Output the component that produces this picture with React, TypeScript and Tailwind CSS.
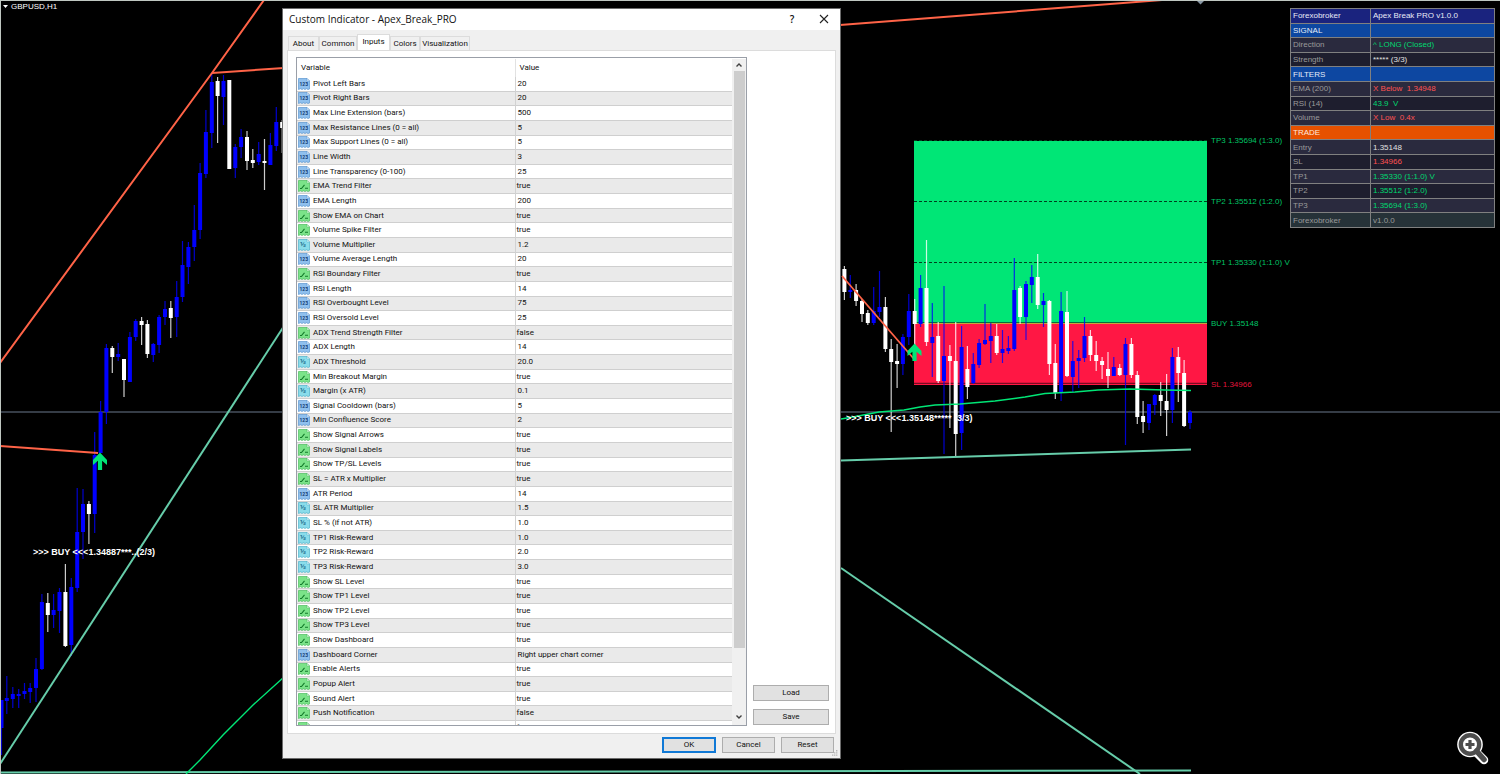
import React from 'react';

type Candle = [x: number, high: number, low: number, top: number, bottom: number, bull: 0 | 1];

const candles: Candle[] = [
  [1.5, 700, 755, 700, 728, 1], [6.8, 676, 714, 698, 701, 1], [12.8, 687, 708, 694, 699, 1],
  [18.7, 689, 708, 694, 695, 1], [24.5, 683, 699, 691, 694, 1], [30.2, 683, 703, 688, 692, 1],
  [36, 658, 702, 669, 688, 1], [41.9, 594, 670, 602, 669, 1], [47.8, 593, 632, 603, 615, 0],
  [53.6, 594, 628, 610, 615, 1], [59.5, 588, 633, 592, 611, 1], [65.4, 564, 647, 592, 646, 0],
  [71.3, 578, 656, 587, 645, 1], [77.2, 488, 592, 532, 588, 1], [83, 489, 559, 504, 532, 1],
  [88.9, 501, 544, 504, 514, 0], [94.7, 432, 533, 455, 514, 1], [100.6, 401, 453, 412, 453, 1],
  [106.4, 344, 424, 348, 412, 1], [112.3, 346, 373, 348, 357, 0], [118.2, 343, 361, 354, 357, 1],
  [124, 359, 397, 359, 380, 0], [129.9, 332, 382, 337, 382, 1], [135.7, 319, 341, 321, 337, 1],
  [141.6, 317, 345, 321, 325, 0], [147.4, 320, 358, 324, 354, 0], [153.3, 343, 362, 344, 355, 1],
  [159.1, 315, 353, 317, 345, 1], [165, 301, 325, 309, 317, 1], [170.8, 301, 338, 308, 318, 0],
  [176.7, 281, 337, 297, 317, 1], [182.5, 241, 302, 265, 297, 1], [188.4, 242, 284, 247, 267, 1],
  [194.3, 205, 261, 230, 247, 1], [200.1, 163, 239, 173, 230, 1], [205.9, 110, 178, 132, 174, 1],
  [211.8, 73, 148, 82, 133, 1], [217.6, 77, 143, 81, 96, 0], [223.5, 75, 125, 81, 97, 1],
  [229.3, 80, 169, 80, 169, 0], [235.3, 144, 178, 147, 168, 1], [241.1, 129, 158, 137, 147, 1],
  [247, 131, 170, 137, 161, 0], [252.8, 149, 168, 160, 163, 0], [258.7, 142, 165, 154, 162, 1],
  [264.5, 139, 190, 161, 163, 0], [270.4, 133, 165, 145, 165, 1], [276.3, 107, 151, 122, 146, 1],
  [282.2, 120, 153, 122, 128, 0],
  [844.4, 266, 300, 269, 292, 0], [850.3, 275, 298, 290, 292, 1], [856.1, 284, 306, 290, 301, 0],
  [862, 299, 322, 301, 314, 0], [867.8, 310, 325, 313, 323, 0], [873.7, 287, 325, 311, 323, 1],
  [879.5, 271, 317, 307, 312, 1], [885.4, 297, 352, 307, 349, 0], [891.2, 339, 432, 349, 362, 0],
  [897.1, 344, 388, 361, 364, 0], [902.9, 334, 375, 337, 364, 1], [908.8, 294, 345, 311, 337, 1],
  [914.7, 299, 345, 311, 324, 0], [920.6, 275, 327, 288, 324, 1], [926.5, 240, 346, 288, 342, 0],
  [932.3, 303, 377, 337, 343, 1], [938.2, 322, 383, 336, 381, 0], [944, 286, 454, 356, 381, 1],
  [949.9, 345, 428, 356, 361, 0], [955.7, 322, 457, 361, 434, 0], [961.6, 326, 450, 347, 433, 1],
  [967.4, 346, 399, 369, 387, 0], [973.3, 353, 384, 364, 383, 1], [979.1, 339, 368, 343, 365, 1],
  [985, 304, 345, 340, 344, 1], [990.8, 323, 363, 336, 341, 1], [996.7, 324, 355, 336, 353, 0],
  [1002.5, 330, 363, 349, 353, 1], [1008.4, 336, 354, 348, 351, 1], [1014.3, 258, 351, 290, 349, 1],
  [1020.1, 286, 324, 288, 317, 0], [1026, 281, 340, 284, 317, 1], [1031.8, 265, 303, 277, 285, 1],
  [1037.7, 254, 309, 277, 305, 0], [1043.5, 293, 327, 301, 305, 1], [1049.4, 300, 375, 301, 364, 0],
  [1055.3, 344, 399, 363, 393, 0], [1061.1, 292, 401, 311, 392, 1], [1067, 291, 377, 312, 376, 0],
  [1072.8, 341, 392, 361, 377, 1], [1078.7, 350, 388, 358, 361, 1], [1084.5, 317, 362, 336, 358, 1],
  [1090.4, 330, 361, 336, 355, 0], [1096.2, 341, 371, 355, 361, 0], [1102.1, 357, 379, 361, 365, 0],
  [1108, 352, 388, 369, 376, 0], [1113.8, 357, 376, 367, 376, 1], [1119.7, 364, 376, 368, 375, 0],
  [1125.5, 338, 445, 344, 375, 1], [1131.4, 338, 378, 344, 375, 0], [1137.3, 371, 424, 375, 417, 0],
  [1143.1, 401, 433, 416, 422, 0], [1149, 404, 430, 404, 423, 1], [1154.8, 394, 415, 395, 405, 1],
  [1160.7, 382, 416, 395, 401, 0], [1166.6, 374, 436, 401, 410, 0], [1172.4, 348, 423, 357, 410, 1],
  [1178.3, 347, 402, 357, 373, 0], [1184.1, 360, 427, 373, 426, 0], [1190, 410, 429, 412, 423, 1],
];

const levels = [
  { y: 140, text: 'TP3 1.35694 (1:3.0)', color: '#00c466' },
  { y: 201, text: 'TP2 1.35512 (1:2.0)', color: '#00c466' },
  { y: 262, text: 'TP1 1.35330 (1:1.0) V', color: '#00c466' },
  { y: 323, text: 'BUY 1.35148', color: '#00c466' },
  { y: 384, text: 'SL 1.34966', color: '#e0153c' },
];

function SignalArrow({ x, y }: { x: number; y: number }) {
  return (
    <path
      transform={`translate(${x} ${y})`}
      d="M0 0 L7 7.5 V12.5 L2.1 8.2 V17.5 H-2.1 V8.2 L-7 12.5 V7.5 Z"
      fill="#00e676"
    />
  );
}

function Chart() {
  return (
    <svg
      className="absolute inset-0 h-full w-full font-['Liberation_Sans',sans-serif]"
      viewBox="0 0 1500 774"
      preserveAspectRatio="xMinYMin slice"
      aria-label="GBPUSD H1 chart"
    >
      <rect x="914" y="141" width="293" height="182" fill="#00e676" />
      <rect x="914" y="323" width="293" height="61" fill="#ff1744" />
      <path d="M0 412H1500" stroke="#47515e" strokeWidth="1.4" />
      <g stroke="#00401f" strokeWidth="1.2" strokeDasharray="3 2">
        <path d="M914 140.5H1207" />
        <path d="M914 201.5H1207" />
        <path d="M914 262.5H1207" />
      </g>
      <path d="M914 322.5H1207" stroke="#0a6b3a" />
      <path d="M914 323.5H1207" stroke="#c9a53a" />
      <path d="M914 383.5H1207" stroke="#7a0b22" strokeWidth="1.4" />
      <path d="M914 384.5H1207" stroke="#ff1744" />
      <g>
        {candles.map(([x, high, low, top, bottom, bull]) => (
          <g key={x} fill={bull ? '#0000ff' : '#ffffff'}>
            <rect x={x - 0.6} y={high} width={1.2} height={low - high} opacity="0.8" />
            <rect x={x - 2} y={top} width={4} height={Math.max(bottom - top, 2)} />
          </g>
        ))}
      </g>
      <g fill="none" stroke="#ff6347" strokeWidth="2">
        <path d="M0 363 L212 73 L264 0" />
        <path d="M212 73 L284 68" />
        <path d="M0 446 L98 453" />
        <path d="M840 25 L1162 0" />
      </g>
      <path d="M842 276 L914 359" stroke="#ff6347" strokeWidth="1.8" />
      <g fill="none" stroke="#66cdaa" strokeWidth="2">
        <path d="M0 764 L284 326" />
        <path d="M841 460.5 L1191 449.5" />
        <path d="M841 568 L1140 774" />
        <path d="M0 772.5 L298 772 L1191 770.5" />
      </g>
      <g fill="none" stroke="#00e676" strokeWidth="1.4">
        <path d="M186 774 L200 760 L223 735 L253 705 L284 677" />
        <path d="M841 419 L853 417 L879 412 L904 410 L920 407 L935 405 L960 404 L995 401 L1025 397 L1045 393.5 L1075 392 L1098 390 L1130 389 L1165 390 L1191 390.5" />
      </g>
      <SignalArrow x={100} y={452.5} />
      <SignalArrow x={914.5} y={343.5} />
      <g fill="#ffffff" fontSize="9" fontWeight="700">
        <text x="33" y="555">{'>>> BUY <<<1.34887***..(2/3)'}</text>
        <text x="846" y="421">{'>>> BUY <<<1.35148***** (3/3)'}</text>
      </g>
      <g fontSize="8">
        {levels.map((l) => (
          <text key={l.text} x="1211" y={l.y + 3} fill={l.color}>
            {l.text}
          </text>
        ))}
      </g>
      <path d="M3 5H8L5.5 8Z" fill="#ffffff" />
      <text x="11" y="9" fontSize="8" fill="#ffffff">
        GBPUSD,H1
      </text>
      <path d="M1196 0H1205L1200.5 4.5Z" fill="#8796a3" />
      <path d="M0 0.5H1500M0.5 0V774" stroke="#bfc7c1" />
    </svg>
  );
}

type Kind = 'int' | 'bool' | 'real';

const inputs: [Kind, string, string][] = [
  ['int', 'Pivot Left Bars', '20'],
  ['int', 'Pivot Right Bars', '20'],
  ['int', 'Max Line Extension (bars)', '500'],
  ['int', 'Max Resistance Lines (0 = all)', '5'],
  ['int', 'Max Support Lines (0 = all)', '5'],
  ['int', 'Line Width', '3'],
  ['int', 'Line Transparency (0-100)', '25'],
  ['bool', 'EMA Trend Filter', 'true'],
  ['int', 'EMA Length', '200'],
  ['bool', 'Show EMA on Chart', 'true'],
  ['bool', 'Volume Spike Filter', 'true'],
  ['real', 'Volume Multiplier', '1.2'],
  ['int', 'Volume Average Length', '20'],
  ['bool', 'RSI Boundary Filter', 'true'],
  ['int', 'RSI Length', '14'],
  ['int', 'RSI Overbought Level', '75'],
  ['int', 'RSI Oversold Level', '25'],
  ['bool', 'ADX Trend Strength Filter', 'false'],
  ['int', 'ADX Length', '14'],
  ['real', 'ADX Threshold', '20.0'],
  ['bool', 'Min Breakout Margin', 'true'],
  ['real', 'Margin (x ATR)', '0.1'],
  ['int', 'Signal Cooldown (bars)', '5'],
  ['int', 'Min Confluence Score', '2'],
  ['bool', 'Show Signal Arrows', 'true'],
  ['bool', 'Show Signal Labels', 'true'],
  ['bool', 'Show TP/SL Levels', 'true'],
  ['bool', 'SL = ATR x Multiplier', 'true'],
  ['int', 'ATR Period', '14'],
  ['real', 'SL ATR Multiplier', '1.5'],
  ['real', 'SL % (if not ATR)', '1.0'],
  ['real', 'TP1 Risk-Reward', '1.0'],
  ['real', 'TP2 Risk-Reward', '2.0'],
  ['real', 'TP3 Risk-Reward', '3.0'],
  ['bool', 'Show SL Level', 'true'],
  ['bool', 'Show TP1 Level', 'true'],
  ['bool', 'Show TP2 Level', 'true'],
  ['bool', 'Show TP3 Level', 'true'],
  ['bool', 'Show Dashboard', 'true'],
  ['int', 'Dashboard Corner', 'Right upper chart corner'],
  ['bool', 'Enable Alerts', 'true'],
  ['bool', 'Popup Alert', 'true'],
  ['bool', 'Sound Alert', 'true'],
  ['bool', 'Push Notification', 'false'],
  ['bool', 'Email Alert', 'false'],
];

const iconColors = {
  int: { fill: '#8fc0ee', edge: '#5c97d0' },
  bool: { fill: '#7be389', edge: '#4dbb60' },
  real: { fill: '#8adcea', edge: '#4fb3cc' },
};

function KindIcon({ kind }: { kind: Kind }) {
  const c = iconColors[kind];
  return (
    <svg className="h-3 w-3 shrink-0" viewBox="0 0 12 12" aria-hidden="true">
      <path
        d="M0.5 0.5H9L11.5 3V11L10 11.5L8.5 10.7L7 11.5L5.5 10.7L4 11.5L2.5 10.7L0.5 11.5Z"
        fill={c.fill}
        stroke={c.edge}
        strokeWidth="0.7"
      />
      <path d="M9 0.5V3H11.5Z" fill="#ffffff" stroke={c.edge} strokeWidth="0.5" />
      {kind === 'bool' && (
        <path d="M2 8.5H3.5L6.5 4.8M7 8.3H10" fill="none" stroke="#137a2b" strokeWidth="1.1" />
      )}
      {kind === 'int' && (
        <text x="5.8" y="8.3" textAnchor="middle" fontSize="5" fontWeight="700" fill="#123d73">
          123
        </text>
      )}
      {kind === 'real' && (
        <text x="5" y="8.2" textAnchor="middle" fontSize="8" fontWeight="700" fill="#1b6d8c">
          ½
        </text>
      )}
    </svg>
  );
}

function InputsTable() {
  return (
    <div className="flex h-[669px] w-[451px] overflow-hidden border border-[#9a9fa8] bg-white pt-px">
      <table className="h-[677px] flex-1 table-fixed border-collapse text-left">
        <thead>
          <tr className="h-[18px]">
            <th className="h-[18px] w-[218px] border-r border-[#e2e2e2] p-0 pl-1 font-normal">Variable</th>
            <th className="p-0 pl-1 font-normal">Value</th>
          </tr>
        </thead>
        <tbody>
          {inputs.map(([kind, name, value]) => (
            <tr key={name} className="border-b border-[#cfcfcf] even:bg-[#eaeaea]">
              <td className="border-r border-[#d2d2d2] p-0 pl-px">
                <div className="flex items-center gap-[3px]">
                  <KindIcon kind={kind} />
                  <span>{name}</span>
                </div>
              </td>
              <td className={kind === 'bool' ? 'p-0 pl-px' : 'p-0 pl-0.5'}>{value}</td>
            </tr>
          ))}
        </tbody>
      </table>
      <div className="flex w-3.5 flex-col items-center bg-[#f0f0f0]">
        <button type="button" aria-label="Scroll up" className="flex h-3 w-full items-center justify-center">
          <svg className="h-2 w-2" viewBox="0 0 8 8">
            <path d="M1.5 5.5L4 3L6.5 5.5" fill="none" stroke="#404040" strokeWidth="1.4" />
          </svg>
        </button>
        <div className="h-[577px] w-[11px] bg-[#cdcdcd]" />
        <div className="flex-1" />
        <button type="button" aria-label="Scroll down" className="flex h-4 w-full items-center justify-center">
          <svg className="h-2 w-2" viewBox="0 0 8 8">
            <path d="M1.5 2.5L4 5L6.5 2.5" fill="none" stroke="#404040" strokeWidth="1.4" />
          </svg>
        </button>
      </div>
    </div>
  );
}

function PushButton({ label, className }: { label: string; className: string }) {
  return (
    <button type="button" className={`flex h-4 items-center justify-center bg-[#e1e1e1] ${className}`}>
      {label}
    </button>
  );
}

const tabs = [
  { label: 'About', width: 'w-[31px]' },
  { label: 'Common', width: 'w-[38px]' },
  { label: 'Inputs', width: 'w-[33px]' },
  { label: 'Colors', width: 'w-[30px]' },
  { label: 'Visualization', width: 'w-[50px]' },
];

function IndicatorDialog() {
  return (
    <section
      role="dialog"
      aria-labelledby="dialog-title"
      className="absolute top-2 left-[282px] flex w-[559px] flex-col border border-[#6b6b6b] bg-[#f0f0f0] font-['Roboto','Liberation_Sans',sans-serif] text-[8px] leading-3 text-[#111111]"
    >
      <header className="flex h-[21px] items-center bg-white pr-2.5 pb-px pl-1.5">
        <h1 id="dialog-title" className="flex-1 font-['Open_Sans',sans-serif] text-[10px]">
          Custom Indicator - Apex_Break_PRO
        </h1>
        <button type="button" aria-label="Help" className="w-3 font-['Open_Sans',sans-serif] text-[10px] font-semibold">
          ?
        </button>
        <button type="button" aria-label="Close" className="ml-5 flex w-3 justify-center">
          <svg className="h-2.5 w-2.5" viewBox="0 0 10 10">
            <path d="M1 1L9 9M9 1L1 9" stroke="#222222" strokeWidth="1.1" />
          </svg>
        </button>
      </header>
      <div className="flex h-5 items-end pl-[5px]" role="tablist">
        {tabs.map((t) =>
          t.label === 'Inputs' ? (
            <button
              key={t.label}
              type="button"
              role="tab"
              aria-selected="true"
              className={`flex h-4 justify-center border border-b-0 border-[#dcdcdc] bg-white pt-px ${t.width}`}
            >
              {t.label}
            </button>
          ) : (
            <button
              key={t.label}
              type="button"
              role="tab"
              aria-selected="false"
              className={`flex h-3.5 items-center justify-center border border-b-0 border-[#dcdcdc] ${t.width}`}
            >
              {t.label}
            </button>
          ),
        )}
      </div>
      <div className="mx-1 flex gap-1.5 border border-[#dcdcdc] bg-white pt-1.5 pr-1.5 pb-[7px] pl-2">
        <InputsTable />
        <div className="flex flex-1 flex-col justify-end gap-2 pb-px">
          <PushButton label="Load" className="border border-[#adadad]" />
          <PushButton label="Save" className="border border-[#adadad]" />
        </div>
      </div>
      <footer className="flex h-6 justify-end gap-1.5 pt-[3px] pr-1.5">
        <PushButton label="OK" className="w-[54px] border-2 border-[#1079d6]" />
        <PushButton label="Cancel" className="w-[53px] border border-[#adadad]" />
        <PushButton label="Reset" className="w-[53px] border border-[#adadad]" />
      </footer>
      <svg className="absolute right-0.5 bottom-0.5 h-1.5 w-1.5" viewBox="0 0 6 6" aria-hidden="true">
        <path d="M4 0h1.4v1.4H4zM4 2.2h1.4v1.4H4zM2 2.2h1.4v1.4H2zM4 4.4h1.4v1.4H4zM2 4.4h1.4v1.4H2zM0 4.4h1.4v1.4H0z" fill="#b5b5b5" />
      </svg>
    </section>
  );
}

const panelRows: [string, string, string, string][] = [
  ['Forexobroker', 'Apex Break PRO v1.0.0', 'bg-[#1a237e] text-[#e8eaf6]', 'text-[#e8eaf6]'],
  ['SIGNAL', '', 'bg-[#0d47a1] text-[#e3ecf8]', ''],
  ['Direction', '^ LONG (Closed)', 'bg-[#2a2a3e] text-[#9a9a9a]', 'text-[#00d870]'],
  ['Strength', '***** (3/3)', 'bg-[#1e1e2e] text-[#9a9a9a]', 'text-[#e0e0e0]'],
  ['FILTERS', '', 'bg-[#0d47a1] text-[#e3ecf8]', ''],
  ['EMA (200)', 'X Below\u00a0 1.34948', 'bg-[#2a2a3e] text-[#9a9a9a]', 'text-[#ff5252]'],
  ['RSI (14)', '43.9\u00a0 V', 'bg-[#1e1e2e] text-[#9a9a9a]', 'text-[#00d870]'],
  ['Volume', 'X Low\u00a0 0.4x', 'bg-[#2a2a3e] text-[#9a9a9a]', 'text-[#ff5252]'],
  ['TRADE', '', 'bg-[#e65100] text-[#ffe9dc]', ''],
  ['Entry', '1.35148', 'bg-[#2a2a3e] text-[#9a9a9a]', 'text-[#e0e0e0]'],
  ['SL', '1.34966', 'bg-[#1e1e2e] text-[#9a9a9a]', 'text-[#ff5252]'],
  ['TP1', '1.35330 (1:1.0) V', 'bg-[#2a2a3e] text-[#9a9a9a]', 'text-[#00d870]'],
  ['TP2', '1.35512 (1:2.0)', 'bg-[#1e1e2e] text-[#9a9a9a]', 'text-[#00d870]'],
  ['TP3', '1.35694 (1:3.0)', 'bg-[#2a2a3e] text-[#9a9a9a]', 'text-[#00d870]'],
  ['Forexobroker', 'v1.0.0', 'bg-[#263238] text-[#9a9a9a]', 'text-[#9a9a9a]'],
];

function Dashboard() {
  return (
    <table className="absolute top-2 right-[5px] h-[220px] w-[205px] table-fixed border-collapse text-left font-['Liberation_Sans',sans-serif] text-[8px] leading-3">
      <tbody>
        {panelRows.map(([name, value, row, tone], i) => (
          <tr key={i} className={row}>
            <td className="w-20 border border-[#808080] p-0 pt-px pl-0.5">{name}</td>
            <td className={`border border-[#808080] p-0 pt-px pl-0.5 ${tone}`}>{value}</td>
          </tr>
        ))}
      </tbody>
    </table>
  );
}

export default function App() {
  return (
    <main className="relative h-screen min-h-[774px] overflow-hidden bg-black">
      <Chart />
      <IndicatorDialog />
      <Dashboard />
      <button type="button" aria-label="Zoom in" className="absolute right-2.5 bottom-2">
        <svg className="h-9 w-9" viewBox="0 0 36 36">
          <path d="M23 23L30 30" stroke="#ffffff" strokeWidth="8.5" strokeLinecap="round" />
          <circle cx="16" cy="14.5" r="12.8" fill="#ffffff" />
          <circle cx="16" cy="14.5" r="9.2" fill="#ffffff" stroke="#4d4d4d" strokeWidth="4.4" />
          <path d="M22.5 21L30 29.5" stroke="#4d4d4d" strokeWidth="5.5" strokeLinecap="round" />
          <path d="M16 10V19M11.5 14.5H20.5" stroke="#4d4d4d" strokeWidth="3.2" />
        </svg>
      </button>
    </main>
  );
}
